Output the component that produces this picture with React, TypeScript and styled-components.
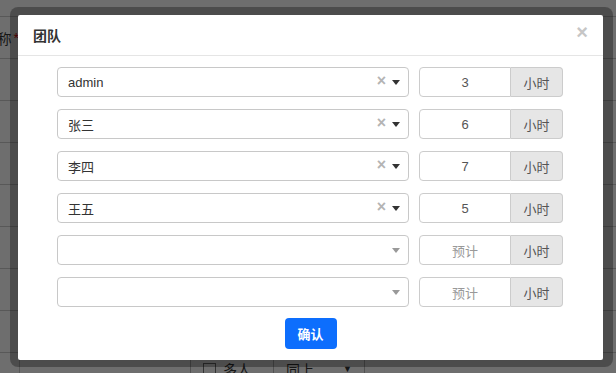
import React from "react";
import styled, { createGlobalStyle } from "styled-components";

const GlobalStyle = createGlobalStyle`
  html, body {
    margin: 0;
    padding: 0;
    width: 616px;
    height: 373px;
    overflow: hidden;
  }
  body {
    font-family: "Liberation Sans", "Noto Sans CJK SC", sans-serif;
    font-size: 13px;
    color: #333;
  }
`;

interface Member {
  name: string;
  hours: string;
}

const members: Member[] = [
  { name: "admin", hours: "3" },
  { name: "张三", hours: "6" },
  { name: "李四", hours: "7" },
  { name: "王五", hours: "5" },
  { name: "", hours: "" },
  { name: "", hours: "" },
];

export default function App() {
  return (
    <>
      <GlobalStyle />
      <Page>
        {/* 뒤쪽 폼 */}
        <BackForm>
          <BackRow>
            <BackLabel>
              名称<Star>*</Star>
            </BackLabel>
            <BackCell />
          </BackRow>
          {Array.from({ length: 7 }).map((_, i) => (
            <BackRow key={i}>
              <BackLabel />
              <BackCell />
            </BackRow>
          ))}
          <BackRow>
            <BackLabel />
            <BackCell>
              <BackCheck>
                <CheckBox />
                多人
              </BackCheck>
              <BackSelect>
                同上<BackCaret>▼</BackCaret>
              </BackSelect>
            </BackCell>
          </BackRow>
        </BackForm>
        <Backdrop />

        {/* 모달 */}
        <ModalShell>
          <ModalPanel>
            <ModalHeader>
              <ModalTitle>团队</ModalTitle>
              <CloseButton>×</CloseButton>
            </ModalHeader>
            <ModalBody>
              {members.map((m, i) => (
                <MemberRow key={i}>
                  <SelectBox>
                    <SelectText>{m.name}</SelectText>
                    {m.name && <ClearMark>×</ClearMark>}
                    <Caret $empty={!m.name} />
                  </SelectBox>
                  <InputGroup>
                    <HourInput $placeholder={!m.hours}>
                      {m.hours || "预计"}
                    </HourInput>
                    <Addon>小时</Addon>
                  </InputGroup>
                </MemberRow>
              ))}
            </ModalBody>
            <ModalFooter>
              <ConfirmButton>确认</ConfirmButton>
            </ModalFooter>
          </ModalPanel>
        </ModalShell>
      </Page>
    </>
  );
}

const Page = styled.div`
  position: relative;
  width: 616px;
  height: 373px;
  background: #fff;
  overflow: hidden;
`;

const BackForm = styled.div`
  display: flex;
  flex-direction: column;
  padding-top: 16px;
`;

const BackRow = styled.div`
  display: grid;
  grid-template-columns: 20px 1fr;
  height: 42px;
  box-sizing: border-box;
  border-top: 1px solid #ccc;
`;

const BackLabel = styled.div`
  display: flex;
  justify-content: flex-end;
  align-items: center;
  white-space: nowrap;
  font-size: 14px;
  color: #333;
  border-right: 1px solid #ccc;
`;

const Star = styled.span`
  color: #e00;
  margin-left: 2px;
`;

const BackCell = styled.div`
  display: flex;
  align-items: flex-start;
  padding: 4px 0 0 170px;
`;

const BackCheck = styled.div`
  display: flex;
  align-items: center;
  gap: 7px;
  width: 70px;
  height: 24px;
  font-size: 14px;
  padding-left: 12px;
  border-left: 1px solid #bbb;
`;

const CheckBox = styled.span`
  width: 11px;
  height: 11px;
  border: 1px solid #777;
  background: #fff;
`;

const BackSelect = styled.div`
  display: flex;
  align-items: center;
  justify-content: space-between;
  width: 66px;
  height: 24px;
  padding: 0 12px 0 12px;
  border-left: 1px solid #bbb;
  border-right: 1px solid #bbb;
  font-size: 14px;
`;

const BackCaret = styled.span`
  font-size: 9px;
`;

const Backdrop = styled.div`
  position: absolute;
  inset: 0;
  background: rgba(0, 0, 0, 0.57);
`;

const ModalShell = styled.div`
  position: absolute;
  left: 10px;
  top: 7px;
  padding: 8px 10px 7px 8px;
  background: rgba(0, 0, 0, 0.3);
  border-radius: 8px;
`;

const ModalPanel = styled.div`
  display: flex;
  flex-direction: column;
  width: 585px;
  height: 345px;
  background: #fff;
  border-radius: 2px;
`;

const ModalHeader = styled.div`
  display: flex;
  align-items: center;
  justify-content: space-between;
  height: 40px;
  padding: 0 15px 0 15px;
  border-bottom: 1px solid #e5e5e5;
`;

const ModalTitle = styled.h2`
  margin: 0;
  font-size: 14px;
  font-weight: bold;
  color: #333;
`;

const CloseButton = styled.span`
  margin-top: -6px;
  font-size: 20px;
  font-weight: bold;
  line-height: 1;
  color: #c6c6c6;
`;

const ModalBody = styled.div`
  display: flex;
  flex-direction: column;
  gap: 12px;
  padding: 11px 0 0 39px;
`;

const MemberRow = styled.div`
  display: flex;
  gap: 10px;
`;

const SelectBox = styled.div`
  display: flex;
  align-items: center;
  box-sizing: border-box;
  width: 352px;
  height: 30px;
  padding: 0 6px 0 10px;
  border: 1px solid #c8c8c8;
  border-radius: 4px;
  background: #fff;
`;

const SelectText = styled.span`
  flex: 1;
  font-size: 13px;
  color: #333;
`;

const ClearMark = styled.span`
  margin-right: 6px;
  margin-top: -3px;
  font-size: 16px;
  font-weight: bold;
  color: #b4b4b4;
`;

const Caret = styled.span<{ $empty?: boolean }>`
  width: 0;
  height: 0;
  margin-right: 2px;
  border-left: 4px solid transparent;
  border-right: 4px solid transparent;
  border-top: 5px solid ${({ $empty }) => ($empty ? "#999" : "#333")};
`;

const InputGroup = styled.div`
  display: flex;
  width: 144px;
  height: 30px;
`;

const HourInput = styled.div<{ $placeholder?: boolean }>`
  display: flex;
  align-items: center;
  justify-content: center;
  box-sizing: border-box;
  width: 92px;
  border: 1px solid #ccc;
  border-radius: 4px 0 0 4px;
  font-size: 13px;
  color: ${({ $placeholder }) => ($placeholder ? "#999" : "#555")};
`;

const Addon = styled.div`
  display: flex;
  align-items: center;
  justify-content: center;
  box-sizing: border-box;
  width: 52px;
  border: 1px solid #ccc;
  border-left: none;
  border-radius: 0 4px 4px 0;
  background: #e6e6e6;
  font-size: 13px;
  color: #555;
`;

const ModalFooter = styled.div`
  display: flex;
  justify-content: center;
  padding-top: 11px;
`;

const ConfirmButton = styled.button`
  width: 52px;
  height: 31px;
  border: none;
  border-radius: 4px;
  background: #0d6efd;
  color: #fff;
  font-family: "Liberation Sans", "Noto Sans CJK SC", sans-serif;
  font-size: 13px;
  font-weight: bold;
`;
